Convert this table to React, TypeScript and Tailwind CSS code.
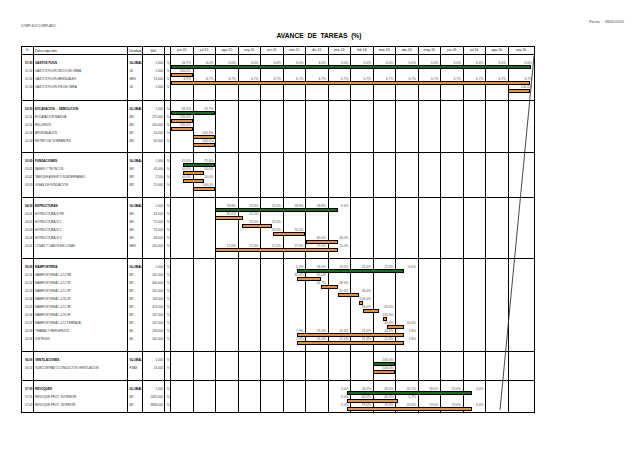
import React from "react";

type Bar = [number, number, "g" | "o"];
type Row = [string, string, string, string, Record<number, string>, Bar?];

const range = (a: number, b: number, v: string): Record<number, string> => {
  const o: Record<number, string> = {};
  for (let i = a; i <= b; i++) o[i] = v;
  return o;
};

const MONTHS = [
  "jun-15", "jul-15", "ago-15", "sep-15", "oct-15", "nov-15", "dic-15", "ene-16",
  "feb-16", "mar-16", "abr-16", "may-16", "jun-16", "jul-16", "ago-16", "sep-16",
];

const T0 = 171;
const ROW = 8.05;

const SECTIONS: { h: string; last?: boolean; rows: Row[] }[] = [
  {
    h: "h-[46px]",
    rows: [
      ["01.00", "GASTOS FIJOS", "GLOBAL", "1.000", { 0: "16.7%", ...range(1, 15, "6.0%") }, [171, 531, "g"]],
      ["01.01", "GASTOS FIJOS INICIO DE OBRA", "GL", "1.000", { 0: "100.0%" }, [171, 193, "o"]],
      ["01.02", "GASTOS FIJOS MENSUALES", "MES", "15.000", range(0, 15, "6.7%"), [171, 530, "o"]],
      ["01.03", "GASTOS FIJOS FIN DE OBRA", "GL", "1.000", { 15: "100.0%" }, [508, 530, "o"]],
    ],
  },
  {
    h: "h-[52px]",
    rows: [
      ["02.00", "EXCAVACION  -  DEMOLICION", "GLOBAL", "1.000", { 0: "83.3%", 1: "16.7%" }, [171, 215, "g"]],
      ["02.01", "EXCAVACION MASIVA", "M3", "275.000", { 0: "100.0%" }, [171, 193, "o"]],
      ["02.02", "RELLENOS", "M3", "200.000", { 0: "100.0%" }, [171, 193, "o"]],
      ["02.03", "APUNTALADOS", "M2", "55.000", { 1: "100.0%" }, [193, 215, "o"]],
      ["02.04", "RETIRO DE SOBRANTES", "M3", "80.000", { 1: "100.0%" }, [193, 215, "o"]],
    ],
  },
  {
    h: "h-[45px]",
    rows: [
      ["03.00", "FUNDACIONES", "GLOBAL", "1.000", { 0: "25.0%", 1: "75.0%" }, [183, 215, "g"]],
      ["03.01", "BASES Y TRONCOS", "M3", "45.000", { 0: "50.0%", 1: "50.0%" }, [183, 204, "o"]],
      ["03.02", "TABIQUE ASIENTO SUBTERRANEO", "M3", "2.500", { 0: "50.0%", 1: "50.0%" }, [183, 204, "o"]],
      ["03.03", "VIGAS DE FUNDACION", "M3", "25.000", { 1: "100.0%" }, [193, 215, "o"]],
    ],
  },
  {
    h: "h-[61px]",
    rows: [
      ["04.00", "ESTRUCTURAS", "GLOBAL", "1.000", { 2: "18.8%", 3: "23.6%", 4: "25.0%", 5: "18.8%", 6: "18.8%", 7: "6.4%" }, [215, 338, "g"]],
      ["04.01", "ESTRUCTURA S/ PB", "M3", "63.500", { 2: "85.0%", 3: "15.0%" }, [215, 243, "o"]],
      ["04.02", "ESTRUCTURA S/ 1", "M3", "75.000", { 3: "75.0%", 4: "25.0%" }, [242, 272, "o"]],
      ["04.03", "ESTRUCTURA S/ 2", "M3", "76.000", { 4: "30.0%", 5: "70.0%" }, [273, 305, "o"]],
      ["04.04", "ESTRUCTURA S/ 3", "M3", "68.000", { 6: "60.0%", 7: "40.0%" }, [306, 338, "o"]],
      ["04.05", "LOSAS Y CAÑOS EN LOSAS", "MES", "200.000", { ...range(2, 6, "17.0%"), 7: "15.0%" }, [215, 338, "o"]],
    ],
  },
  {
    h: "h-[93px]",
    rows: [
      ["05.00", "MAMPOSTERIA", "GLOBAL", "1.000", { 5: "5.0%", 6: "18.0%", 7: "23.0%", 8: "21.0%", 9: "22.0%", 10: "6.0%" }, [297, 404, "g"]],
      ["05.01", "MAMPOSTERIA L 0.12 PB", "M2", "420.000", { 5: "35.0%", 6: "65.0%" }, [297, 321, "o"]],
      ["05.02", "MAMPOSTERIA L 0.12 1P", "M2", "400.000", { 6: "41.7%", 7: "58.3%" }, [321, 338, "o"]],
      ["05.03", "MAMPOSTERIA L 0.12 2P", "M2", "515.000", { 7: "51.0%", 8: "36.0%" }, [338, 359, "o"]],
      ["05.04", "MAMPOSTERIA L 0.18 2P", "M2", "118.000", { 8: "100.0%" }, [359, 363, "o"]],
      ["05.05", "MAMPOSTERIA L 0.12 3P", "M2", "474.000", { 8: "33.0%", 9: "45.0%" }, [363, 379, "o"]],
      ["05.06", "MAMPOSTERIA L 0.18 3P", "M2", "247.000", { 9: "100.0%" }, [383, 387, "o"]],
      ["05.07", "MAMPOSTERIA L 0.12 TERRAZA", "M2", "147.000", { 9: "50.0%", 10: "50.0%" }, [387, 404, "o"]],
      ["05.08", "TRABAS Y REFUERZOS", "ML", "234.000", { 5: "7.8%", ...range(6, 9, "21.0%"), 10: "7.8%" }, [297, 404, "o"]],
      ["05.09", "DINTELES", "ML", "241.000", { 5: "7.8%", ...range(6, 9, "21.0%"), 10: "7.8%" }, [297, 404, "o"]],
    ],
  },
  {
    h: "h-[29px]",
    rows: [
      ["06.00", "VENTILACIONES", "GLOBAL", "1.000", { 9: "100.0%" }, [373, 395, "g"]],
      ["06.01", "SUBCONTRATO CONDUCTOS VENTILACION", "PZAS", "24.000", { 9: "100.0%" }, [373, 395, "o"]],
    ],
  },
  {
    h: "h-[31px]",
    last: true,
    rows: [
      ["07.00", "REVOQUES", "GLOBAL", "1.000", { 7: "4.0%", 8: "26.0%", 9: "26.0%", 10: "16.7%", 11: "18.0%", 12: "15.0%", 13: "4.0%" }, [347, 472, "g"]],
      ["07.01", "REVOQUE PROY  EXTERIOR", "M2", "1822.000", { 7: "6.0%", 8: "40.0%", 9: "40.0%", 10: "5.7%" }, [347, 398, "o"]],
      ["07.02", "REVOQUE PROY  INTERIOR", "M2", "3808.000", { 7: "1.0%", ...range(8, 12, "19.0%"), 13: "6.0%" }, [347, 472, "o"]],
    ],
  },
];

function Cell({ children, className }: { children?: React.ReactNode; className: string }) {
  return <div className={"h-[8.05px] leading-[8.05px] whitespace-pre overflow-visible " + className}>{children}</div>;
}

function Section({ rows, h, last }: { rows: Row[]; h: string; last?: boolean }) {
  const bold = (r: Row) => r[0].endsWith(".00");
  return (
    <div className={`flex ${h} ${last ? "" : "border-b border-black"} text-[3px] text-[#333]`}>
      <div className="w-[12px] border-r border-black pt-[3.5px]">
        {rows.map((r) => (
          <Cell key={r[0]} className={`text-right pr-[0.5px] ${bold(r) ? "font-bold text-black" : ""}`}>{r[0]}</Cell>
        ))}
      </div>
      <div className="w-[94px] border-r border-black pt-[3.5px]">
        {rows.map((r) => (
          <Cell key={r[0]} className={`pl-[1px] ${bold(r) ? "font-bold text-black" : ""}`}>{r[1]}</Cell>
        ))}
      </div>
      <div className="w-[15px] border-r border-black pt-[3.5px]">
        {rows.map((r) => (
          <Cell key={r[0]} className={`pl-[1.5px] ${bold(r) ? "font-bold text-black" : ""}`}>{r[2]}</Cell>
        ))}
      </div>
      <div className="w-[22px] border-r border-black pt-[3.5px]">
        {rows.map((r) => (
          <Cell key={r[0]} className="text-right pr-[1px]">{r[3]}</Cell>
        ))}
      </div>
      <div className="w-[6px] border-r border-black pt-[3.5px]">
        {rows.map((r) => (
          <Cell key={r[0]} className="text-right pr-[0.5px]">%</Cell>
        ))}
      </div>
      <div className="relative flex w-[362.5px]">
        {MONTHS.map((m, i) => (
          <div key={m} className={i < 15 ? "w-[22.5px] border-r border-black pt-[3.5px]" : "w-[25px] pt-[3.5px]"}>
            {rows.map((r) => (
              <Cell key={r[0]} className="text-right pr-[1.5px] text-[3.3px] text-[#555]">{r[4][i] ?? ""}</Cell>
            ))}
          </div>
        ))}
        {rows.map((r, idx) => {
          const b = r[5];
          if (!b) return null;
          return (
            <div
              key={r[0] + "b"}
              className={`absolute h-[4px] border-[0.8px] border-black ${b[2] === "g" ? "bg-[#1d6b1e]" : "bg-[#e8913a]"}`}
              style={{ top: 9.5 + idx * ROW, left: b[0] - T0, width: b[1] - b[0] }}
            />
          );
        })}
      </div>
    </div>
  );
}

export default function App() {
  return (
    <div className="relative w-[638px] h-[452px] bg-white overflow-hidden font-['Liberation_Sans',Arial,sans-serif] text-[#222]">
      <div className="h-[46px] flex flex-col">
        <div className="h-[20px]" />
        <div className="h-[5px] leading-[5px] text-[3.8px] text-right pr-[14px] whitespace-pre text-[#444]">Fecha  :  08/05/2015</div>
        <div className="h-[3px] leading-[3px] text-[3px] pl-[21px] text-[#444]">COMPLEJO DOMPLANO</div>
        <div className="mt-[4px] h-[8px] leading-[8px] text-center text-[6.7px] font-bold text-black whitespace-pre">AVANCE  DE  TAREAS  (%)</div>
      </div>
      <div className="ml-[21px] w-[513.5px] border border-black">
        <div className="flex h-[8px] border-b border-black text-[#222]">
          <div className="w-[12px] border-r border-black text-center text-[3.5px] leading-[7px]">Ít.</div>
          <div className="w-[94px] border-r border-black pl-[1px] text-[4.2px] leading-[7px]">Descripción</div>
          <div className="w-[15px] border-r border-black text-center text-[4px] leading-[7px]">Unidad</div>
          <div className="w-[22px] border-r border-black text-center text-[4px] leading-[7px]">Vol.</div>
          <div className="w-[6px] border-r border-black" />
          <div className="flex w-[362.5px]">
            {MONTHS.map((m, i) => (
              <div key={m} className={`${i < 15 ? "w-[22.5px] border-r border-black" : "w-[25px]"} text-center text-[3.4px] leading-[7px]`}>{m}</div>
            ))}
          </div>
        </div>
        {SECTIONS.map((s, i) => (
          <Section key={i} rows={s.rows} h={s.h} last={s.last} />
        ))}
      </div>
      <svg className="absolute left-0 top-0 pointer-events-none" width={638} height={452}>
        <line x1={534} y1={56} x2={500} y2={410} stroke="#333" strokeWidth={0.9} />
      </svg>
    </div>
  );
}
